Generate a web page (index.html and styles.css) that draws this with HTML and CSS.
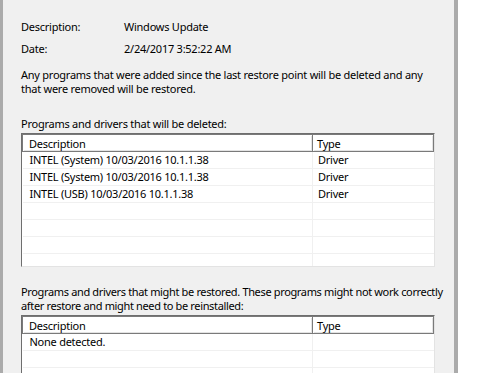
FILE: index.html
```html
<!DOCTYPE html>
<html lang="en">

<head>
  <meta charset="UTF-8">
  <title>System Restore</title>
  <link rel="stylesheet" href="styles.css">
</head>

<body>
  <div id="window">
    <div class="edge-left"></div>
    <div id="panel">
      <div class="info-row">
        <span class="info-label">Description:</span>
        <span>Windows Update</span>
      </div>
      <div class="info-row">
        <span class="info-label">Date:</span>
        <span>2/24/2017 3:52:22 AM</span>
      </div>
      <p class="note">Any programs that were added since the last restore point will be deleted and any that were removed will be restored.</p>

      <p class="caption">Programs and drivers that will be deleted:</p>
      <div class="list list-deleted">
        <table>
          <tr>
            <th class="col-desc">Description</th>
            <th class="col-type">Type</th>
          </tr>
          <tr><td>INTEL (System) 10/03/2016 10.1.1.38</td><td>Driver</td></tr>
          <tr><td>INTEL (System) 10/03/2016 10.1.1.38</td><td>Driver</td></tr>
          <tr><td>INTEL (USB) 10/03/2016 10.1.1.38</td><td>Driver</td></tr>
          <tr><td></td><td></td></tr>
          <tr><td></td><td></td></tr>
          <tr><td></td><td></td></tr>
          <tr><td></td><td></td></tr>
        </table>
      </div>

      <p class="caption caption-two">Programs and drivers that might be restored. These programs might not work correctly after restore and might need to be reinstalled:</p>
      <div class="list list-restored">
        <table>
          <tr>
            <th class="col-desc">Description</th>
            <th class="col-type">Type</th>
          </tr>
          <tr><td>None detected.</td><td></td></tr>
          <tr><td></td><td></td></tr>
          <tr><td></td><td></td></tr>
        </table>
      </div>
    </div>
    <div class="edge-right"></div>
  </div>
</body>

</html>
```

FILE: styles.css
```css
* {
  margin: 0;
  padding: 0;
  box-sizing: border-box;
}

body {
  background-color: #fff;
  font-family: "Noto Sans", "DejaVu Sans", sans-serif;
  font-size: 11px;
  letter-spacing: -0.25px;
  color: #000;
}

#window {
  display: flex;
  height: 373px;
  overflow: hidden;
}

.edge-left {
  width: 3px;
  background-color: #ababab;
}

.edge-right {
  width: 4px;
  background-color: #ababab;
}

#panel {
  width: 451px;
  background-color: #f0f0f0;
  padding: 19px 0 0 18px;
}

.info-row {
  display: flex;
  height: 22px;
  line-height: 16px;
}

.info-label {
  width: 103px;
}

.note {
  margin-top: 5px;
  width: 412px;
  line-height: 14px;
}

.caption {
  margin: 21px 0 2px;
  line-height: 14px;
}

.caption-two {
  margin: 18px 0 2px;
  width: 432px;
  letter-spacing: -0.35px;
}

.list {
  width: 414px;
  background-color: #fff;
  border: 1px solid;
  border-color: #6e6e6e #e3e3e3 #e3e3e3 #6e6e6e;
  overflow: hidden;
}

.list-deleted {
  height: 134px;
}

.list-restored {
  height: 80px;
}

table {
  width: 100%;
  border-collapse: collapse;
  table-layout: fixed;
}

th {
  height: 17px;
  font-weight: normal;
  text-align: left;
  line-height: 15px;
  background-color: #fff;
  border: 1px solid #7a7a7a;
  box-shadow: inset 1px 1px 0 #fff, inset -1px -1px 0 #e3e3e3;
}

.col-desc {
  width: 290px;
  padding-left: 6px;
}

.col-type {
  padding-left: 4px;
}

td {
  height: 17px;
  line-height: 16px;
  border-bottom: 1px solid #f0f0f0;
  white-space: nowrap;
}

td:first-child {
  padding-left: 7px;
}

td:last-child {
  padding-left: 5px;
  border-left: 1px solid #f0f0f0;
}
```
